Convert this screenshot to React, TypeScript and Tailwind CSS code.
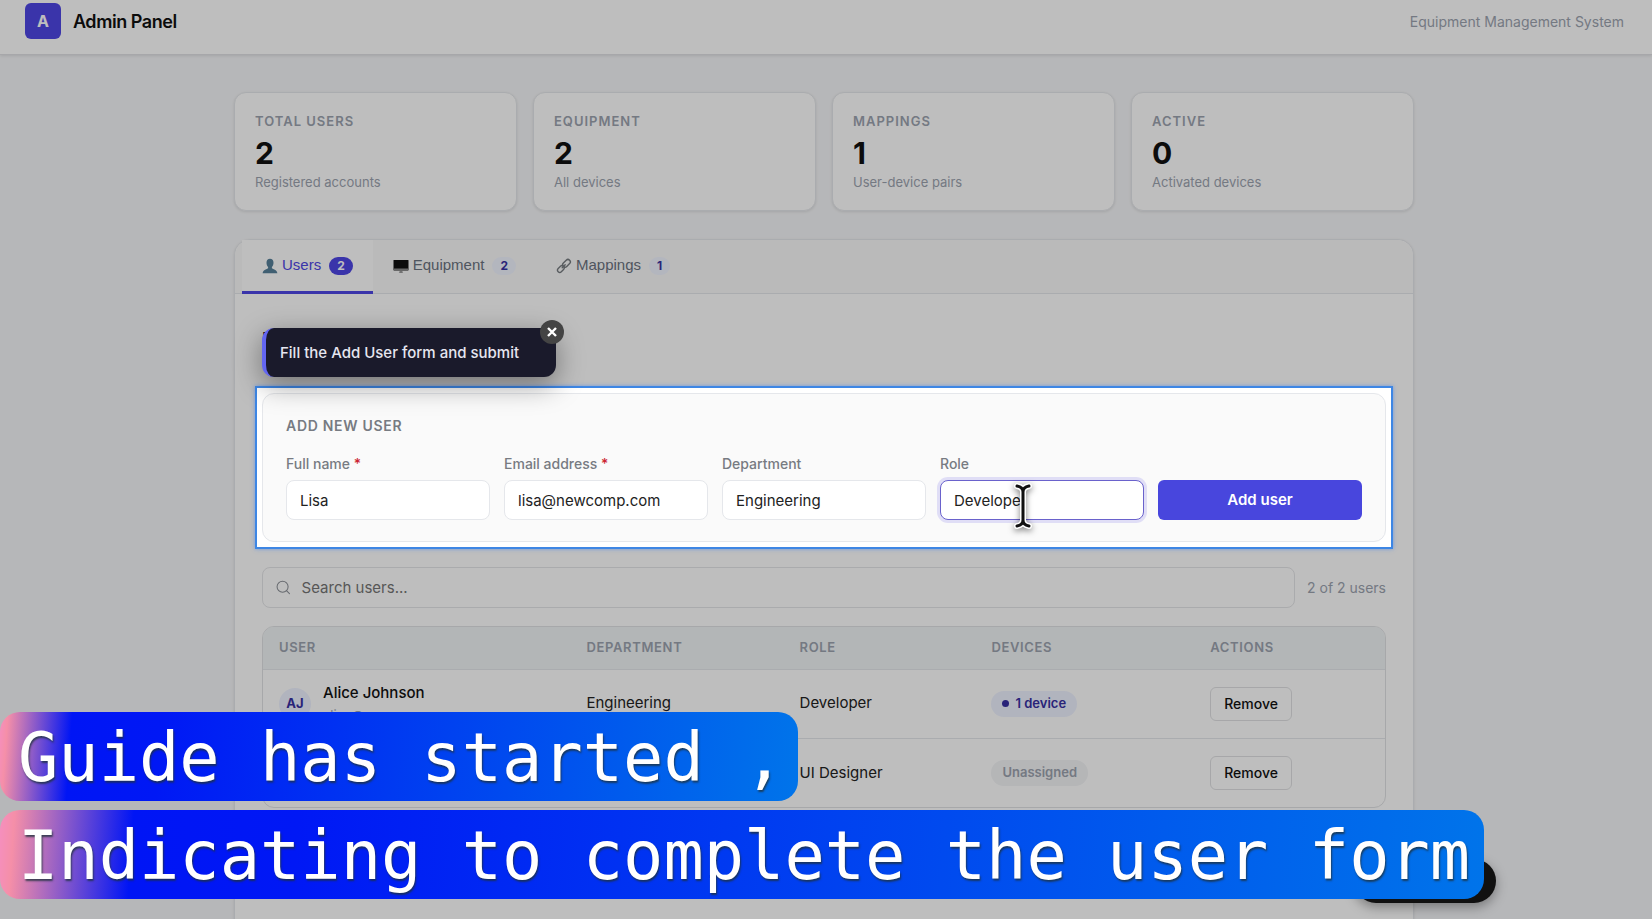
import { Search } from "lucide-react";
import type { ReactNode } from "react";

const stats = [
  { label: "TOTAL USERS", value: "2", note: "Registered accounts" },
  { label: "EQUIPMENT", value: "2", note: "All devices" },
  { label: "MAPPINGS", value: "1", note: "User-device pairs" },
  { label: "ACTIVE", value: "0", note: "Activated devices" },
];

function PersonIcon() {
  return (
    <svg viewBox="0 0 16 16" className="h-4 w-4" aria-hidden="true">
      <path d="M8 .8c2.2 0 3.5 1.6 3.5 4 0 1.700-.7 3.300-1.600 4.200v1.300c1 .9 5 1.200 5.500 4.900H.6C1.100 11.500 5.100 11.200 6.100 10.300V9C5.200 8.100 4.500 6.500 4.500 4.800c0-2.400 1.300-4 3.500-4z" fill="#56809a" />
    </svg>
  );
}

function MonitorIcon() {
  return (
    <svg viewBox="0 0 16 16" className="h-4 w-4" aria-hidden="true">
      <rect x=".5" y="2" width="15" height="10" rx=".6" fill="#111" />
      <path d="M.5 10.600h15v1.700a.6.6 0 0 1-.6.6H1.100a.6.6 0 0 1-.6-.6z" fill="#8b8b8b" />
      <path d="M6.500 12.900h3v1.300l.8.8H5.700l.8-.8z" fill="#9a9a9a" />
    </svg>
  );
}

function LinkIcon() {
  return (
    <svg viewBox="0 0 16 16" className="h-4 w-4" fill="none" stroke="#777c80" strokeWidth="1.400" strokeLinecap="round" aria-hidden="true">
      <rect x="-3.800" y="-2.200" width="7.600" height="4.400" rx="2.200" transform="translate(4.900 11) rotate(-45)" />
      <rect x="-4.400" y="-2.400" width="8.800" height="4.800" rx="2.400" transform="translate(10.500 5.300) rotate(-45)" />
      <path d="M6.200 9.800l3-3" />
    </svg>
  );
}

function Tab({ icon, label, count, active }: { icon: ReactNode; label: string; count: number; active?: boolean }) {
  return (
    <button
      role="tab"
      aria-selected={active ?? false}
      className={`flex h-[54px] items-center border-b-[3px] px-5 font-['Liberation_Sans',sans-serif] text-[15px] ${
        active ? "border-[#4f46e5] bg-white text-[#4f46e5]" : "border-transparent text-[#6b7280]"
      }`}
    >
      {icon}
      <span className="ml-1">{label}</span>
      <span
        className={`ml-2 rounded-full px-2 font-['Inter',sans-serif] text-xs leading-[18px] font-bold ${
          active ? "bg-[#4f46e5] text-white" : "bg-[#f1f4ff] text-[#3730a3]"
        }`}
      >
        {count}
      </span>
    </button>
  );
}

function Field({ id, label, value, required, focused }: { id: string; label: string; value: string; required?: boolean; focused?: boolean }) {
  return (
    <div className="relative min-w-0">
      <label htmlFor={id} className="block text-sm leading-5 font-medium text-[#777b82]">
        {label} {required && <span className="text-[#cc2430]">*</span>}
      </label>
      <input
        id={id}
        defaultValue={value}
        className={`mt-1.5 block h-10 w-full rounded-lg border bg-white px-[13px] text-[15px] text-[#222] outline-none ${
          focused ? "border-[#6a62cc] shadow-[0_0_0_3px_rgba(79,70,229,0.15)]" : "border-[#e5e7eb]"
        }`}
      />
      {focused && <TextCursor />}
    </div>
  );
}

function TextCursor() {
  return (
    <svg viewBox="0 0 24 48" className="absolute top-7 left-[71px] h-12 w-6 drop-shadow-[0_2px_3px_rgba(0,0,0,0.5)]" fill="none" strokeLinecap="round" aria-hidden="true">
      <path d="M6 4c3 .5 6 2 6 6v28c0 4-3 5.500-6 6M18 4c-3 .5-6 2-6 6M18 44c-3-.5-6-2-6-6" stroke="#fff" strokeWidth="6" />
      <path d="M6 4c3 .5 6 2 6 6v28c0 4-3 5.500-6 6M18 4c-3 .5-6 2-6 6M18 44c-3-.5-6-2-6-6" stroke="#111" strokeWidth="3" />
    </svg>
  );
}

type User = { initials?: string; name?: string; email?: string; department?: string; role: string; devices: number };

const users: User[] = [
  { initials: "AJ", name: "Alice Johnson", email: "alice@company.com", department: "Engineering", role: "Developer", devices: 1 },
  { role: "UI Designer", devices: 0 },
];

function UserRow({ initials, name, email, department, role, devices }: User) {
  return (
    <tr className="h-[69px] border-t border-[#e5e7eb]">
      <td className="px-4">
        {name && (
          <div className="flex items-center gap-3">
            <span className="flex h-8 w-8 shrink-0 items-center justify-center rounded-full bg-[#eef2ff] text-[13px] font-bold text-[#3730a3]">{initials}</span>
            <div>
              <div className="text-[15px] leading-5 font-medium text-[#111]">{name}</div>
              <div className="pt-0.5 text-[13px] leading-5 text-[#9ca3af]">{email}</div>
            </div>
          </div>
        )}
      </td>
      <td className="px-4">{department}</td>
      <td className="px-4">{role}</td>
      <td className="px-4">
        {devices > 0 ? (
          <span className="inline-flex h-[26px] items-center gap-1.5 rounded-full bg-[#eef2ff] px-[11px] text-[13px] font-semibold text-[#3730a3]">
            <span className="h-[7px] w-[7px] rounded-full bg-[#3730a3]" />
            {devices} device
          </span>
        ) : (
          <span className="inline-flex h-[26px] items-center rounded-full bg-[#f3f4f6] px-[11px] text-[13px] font-semibold text-[#9ca3af]">Unassigned</span>
        )}
      </td>
      <td className="px-4">
        <button className="h-[34px] rounded-md border border-[#e0e1e3] bg-white px-[13px] text-sm font-medium text-[#111]">Remove</button>
      </td>
    </tr>
  );
}

function Caption({ children }: { children: ReactNode }) {
  return (
    <div className="flex h-[89px] w-max items-center rounded-[20px] bg-[linear-gradient(94deg,#f58fc0_0%,#f58fa8_1%,#0015f5_9%,#0018f5_20%,#0074ea_100%)] pt-1 pr-3.5 pl-[18px] font-['DejaVu_Sans_Mono',monospace] text-[67px] leading-none whitespace-pre text-white [text-shadow:1px_2px_2px_rgba(30,50,60,0.8)]">
      {children}
    </div>
  );
}

export default function App() {
  return (
    <div className="relative h-screen overflow-hidden bg-[#f5f6f8] pr-1 font-['Inter',sans-serif] text-[#222]">
      <header className="-mr-1 flex h-[55px] items-center justify-between border-b border-[#e0e1e4] bg-white pr-7 pb-3 pl-[25px] shadow-[0_1px_3px_rgba(0,0,0,0.1)]">
        <div className="flex items-center gap-3">
          <span className="flex h-9 w-9 items-center justify-center rounded-md bg-[#4f46e5] text-base font-bold text-white">A</span>
          <h1 className="pt-px text-lg leading-7 font-semibold tracking-tight text-[#111]">Admin Panel</h1>
        </div>
        <span className="pt-px text-sm text-[#9ca3af]">Equipment Management System</span>
      </header>

      <main className="mx-auto max-w-[1180px] pt-[37px]">
        <section className="grid grid-cols-4 gap-4">
          {stats.map((s) => (
            <div key={s.label} className="h-[119px] rounded-xl border border-[#e5e7eb] bg-white px-5 pt-[19px] shadow-[0_1px_3px_rgba(0,0,0,0.1)]">
              <div className="text-[13px] leading-[18px] font-semibold tracking-[1px] text-[#9ca3af]">{s.label}</div>
              <div className="mt-[5px] text-[30px] leading-9 font-bold text-[#111]">{s.value}</div>
              <div className="mt-px text-[13px] leading-5 text-[#9ca3af]">{s.note}</div>
            </div>
          ))}
        </section>

        <section className="mt-7 h-[720px] rounded-2xl border border-[#e5e7eb] bg-white shadow-[0_1px_3px_rgba(0,0,0,0.1)]">
          <div role="tablist" className="flex h-[54px] rounded-t-2xl border-b border-[#e5e7eb] bg-[#fafafa] px-[7px]">
            <Tab icon={<PersonIcon />} label="Users" count={2} active />
            <Tab icon={<MonitorIcon />} label="Equipment" count={2} />
            <Tab icon={<LinkIcon />} label="Mappings" count={1} />
          </div>

          <div className="px-[27px] pt-7">
            <h2 className="h-[71px] pt-1 text-lg leading-7 font-semibold text-[#111]">Users</h2>

            <div className="relative z-10">
              <div className="pointer-events-none absolute -inset-[7px] border-2 border-[#3d86e4] shadow-[0_0_4px_rgba(59,130,246,0.6),0_0_0_2000px_rgba(0,0,0,0.255)]" />
              <form className="rounded-xl border border-[#e5e7eb] bg-[#fafafa] px-[23px] pt-[22px] pb-[21px]" onSubmit={(e) => e.preventDefault()}>
                <h3 className="text-sm leading-5 font-semibold tracking-wider text-[#777b82]">ADD NEW USER</h3>
                <div className="mt-[18px] grid grid-cols-5 items-end gap-3.5">
                  <Field id="full-name" label="Full name" value="Lisa" required />
                  <Field id="email" label="Email address" value="lisa@newcomp.com" required />
                  <Field id="department" label="Department" value="Engineering" />
                  <Field id="role" label="Role" value="Develope" focused />
                  <button className="h-10 rounded-md bg-[#4846dd] pt-px text-[15px] font-semibold text-white">Add user</button>
                </div>
              </form>
              <div role="dialog" aria-label="Guide step" className="absolute bottom-full left-0 mb-4 flex h-[49px] w-[294px] items-center rounded-xl border-l-4 border-[#6366f1] bg-[#1a1a2b] pt-px pl-[14px] text-[15px] font-medium text-[#e6e6f0] shadow-[0_8px_28px_rgba(0,0,0,0.4)]">
                Fill the Add User form and submit
                <button aria-label="Close guide" className="absolute -top-2 -right-2 flex h-6 w-6 items-center justify-center rounded-full bg-[#444]">
                  <svg viewBox="0 0 10 10" className="h-2.5 w-2.5" stroke="#fff" strokeWidth="2.400" aria-hidden="true">
                    <path d="M1 1l8 8M9 1L1 9" />
                  </svg>
                </button>
              </div>
            </div>

            <div className="mt-[25px] flex items-center gap-3">
              <label className="flex h-[41px] flex-1 items-center gap-2.5 rounded-lg border border-[#e5e6e8] px-3">
                <Search className="h-[17px] w-[17px] text-[#8b8f96]" strokeWidth={1.5} />
                <input aria-label="Search users" placeholder="Search users..." className="w-full bg-transparent pt-px text-[15px] outline-none placeholder:text-[#757575]" />
              </label>
              <span className="text-sm text-[#9ca3af]">2 of 2 users</span>
            </div>

            <div className="mt-[18px] overflow-hidden rounded-xl border border-[#e0e2e4]">
              <table className="w-full table-fixed text-left text-[15px]">
                <colgroup>
                  <col className="w-[27.4%]" />
                  <col className="w-[19%]" />
                  <col className="w-[17.1%]" />
                  <col className="w-[19.5%]" />
                  <col className="w-[17%]" />
                </colgroup>
                <thead>
                  <tr className="h-[42px] bg-[#f0f4f6] text-[13px] tracking-wider text-[#9ca3af]">
                    <th className="px-4 font-semibold">USER</th>
                    <th className="px-4 font-semibold">DEPARTMENT</th>
                    <th className="px-4 font-semibold">ROLE</th>
                    <th className="px-4 font-semibold">DEVICES</th>
                    <th className="px-4 font-semibold">ACTIONS</th>
                  </tr>
                </thead>
                <tbody>
                  {users.map((u) => (
                    <UserRow key={u.role} {...u} />
                  ))}
                </tbody>
              </table>
            </div>
          </div>
        </section>
      </main>

      <button aria-label="Guide menu" className="absolute right-[156px] bottom-4 z-20 h-11 w-[142px] rounded-full bg-[#111] shadow-[0_4px_12px_rgba(0,0,0,0.35)]" />

      <div className="absolute bottom-5 left-0 z-30 flex flex-col gap-[9px]">
        <Caption>Guide has started ,</Caption>
        <Caption>Indicating to complete the user form</Caption>
      </div>
    </div>
  );
}
